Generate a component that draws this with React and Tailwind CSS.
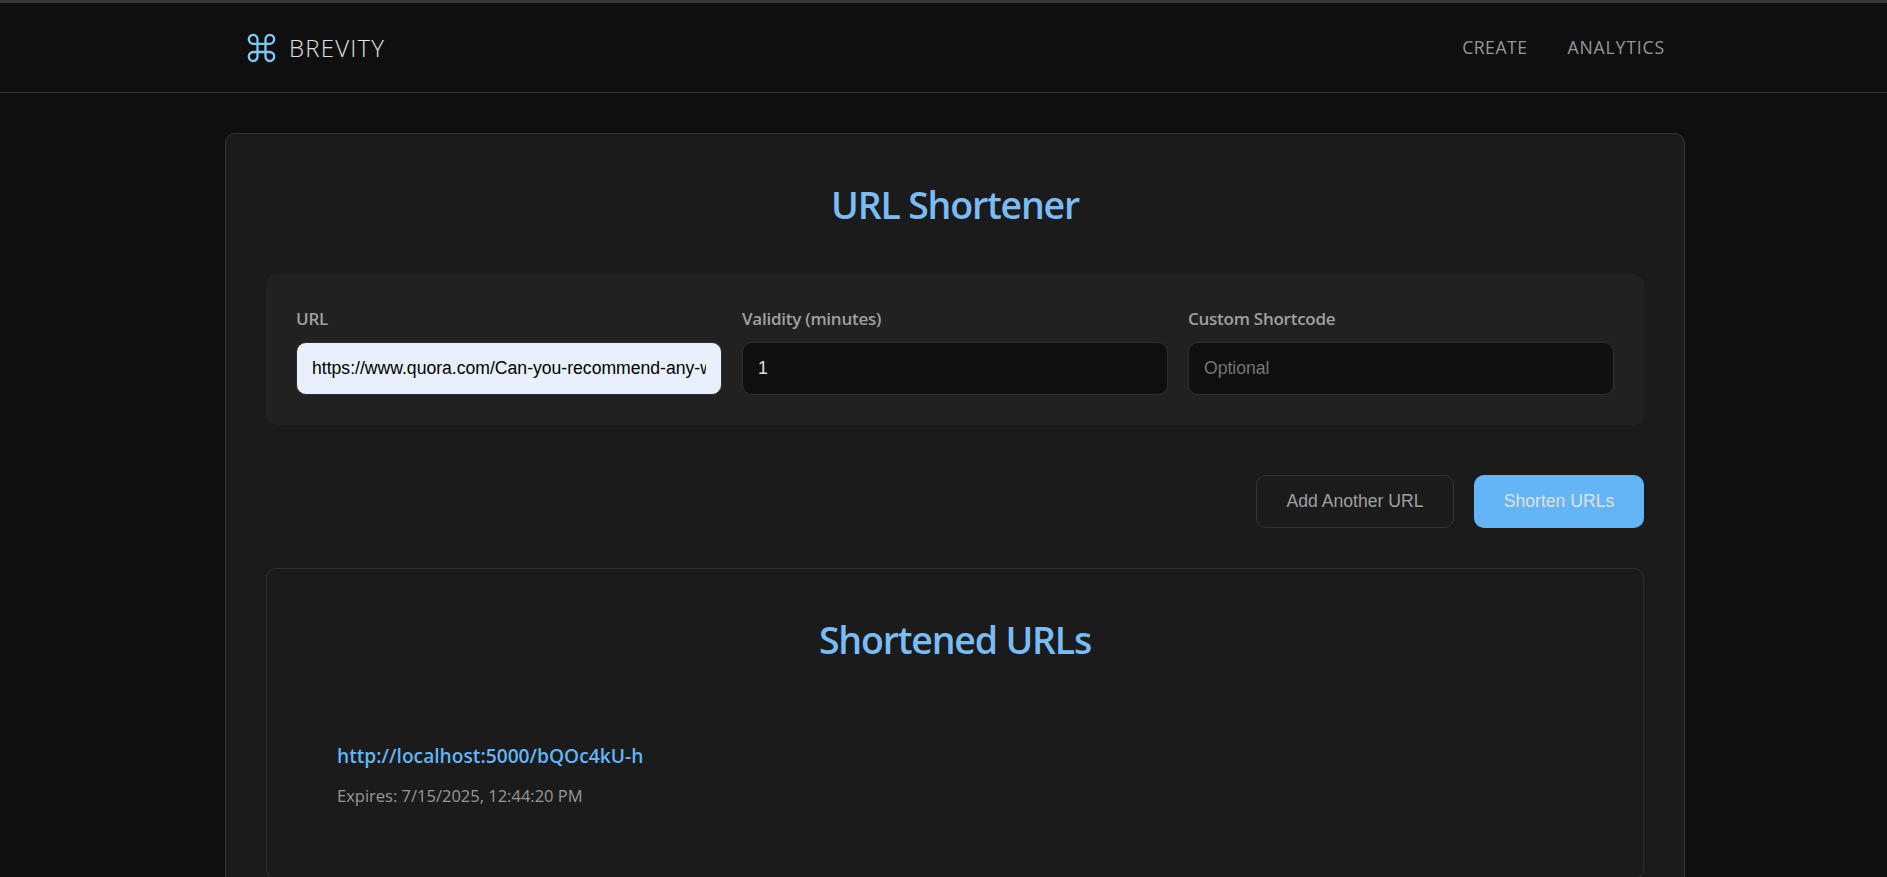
function CommandMark() {
  return (
    <svg width="31" height="31" viewBox="0 0 31 31" fill="none" stroke="#7cc9f7" strokeWidth="2.3" className="shrink-0">
      <path d="M11.500 20V7.400a4.350 4.500 0 1 0-4.350 4.400H23.850a4.350 4.500 0 1 0-4.350-4.400V24.400a4.350 4.500 0 1 0 4.350-4.400H7.150a4.350 4.500 0 1 0 4.350 4.400Z" />
    </svg>
  );
}

function Field({ label, children }) {
  return (
    <label className="flex flex-1 min-w-0 flex-col">
      <span className="mb-2.5 h-[26px] text-[17px] leading-[26px] font-semibold tracking-[-0.25px] text-[#a0a0a0]">{label}</span>
      {children}
    </label>
  );
}

const inputBase =
  "h-[53px] w-full rounded-[10px] border border-[#2f2f2f] px-[15px] font-['Liberation_Sans',Arial,sans-serif] text-[17.600px] outline-none";

export default function App() {
  return (
    <div className="h-[877px] overflow-hidden bg-[#0f0f0f] font-['Open_Sans','Noto_Sans',sans-serif] text-[#e0e0e0]">
      <div className="h-[3px] bg-[#37373c]" />
      <header className="flex h-[90px] items-center justify-between border-b border-[#333] pr-[222px] pl-[246px]">
        <div className="flex items-center gap-3">
          <CommandMark />
          <span className="text-[24px] leading-8 font-light tracking-[1.2px]">BREVITY</span>
        </div>
        <nav className="flex gap-10 text-[17.600px] text-[#989898]">
          <a className="tracking-[0.5px]">CREATE</a>
          <a className="tracking-[0.85px]">ANALYTICS</a>
        </nav>
      </header>
      <main className="ml-[225px] mt-10 h-[800px] w-[1460px] rounded-[10px] border border-[#333] bg-[#1b1b1b] px-10">
        <h1 className="mt-[45px] h-[52px] text-center text-[37.500px] leading-[52px] font-semibold tracking-[-1.200px] text-[#7abcf5]">URL Shortener</h1>
        <section className="mt-[43px] flex h-[151px] gap-5 rounded-[10px] bg-[#212121] px-[30px] pt-8">
          <Field label="URL">
            <input
              className={inputBase + " bg-[#e8f0fe] text-black"}
              defaultValue="https://www.quora.com/Can-you-recommend-any-websites"
            />
          </Field>
          <Field label="Validity (minutes)">
            <input className={inputBase + " bg-[#0f0f0f] text-[#e0e0e0]"} defaultValue="1" />
          </Field>
          <Field label="Custom Shortcode">
            <input className={inputBase + " bg-[#0f0f0f] placeholder:text-[#757575]"} placeholder="Optional" />
          </Field>
        </section>
        <div className="mt-[50px] flex h-[53px] justify-end gap-5 font-['Liberation_Sans',Arial,sans-serif] text-[17.600px]">
          <button className="w-[198px] rounded-[10px] border border-[#333] text-[#a0a0a0]">Add Another URL</button>
          <button className="w-[170px] rounded-[10px] bg-[#64b5f6] text-[#e0e0e0]">Shorten URLs</button>
        </div>
        <section className="mt-10 h-[311px] rounded-[10px] border border-[#2f2f2f] px-[70px]">
          <h2 className="mt-[45px] h-[52px] text-center text-[37.500px] leading-[52px] font-semibold tracking-[-1.200px] text-[#7abcf5]">Shortened URLs</h2>
          <a className="mt-[74px] block h-[32px] text-[19.200px] leading-[32px] font-semibold text-[#64b5f6]">http://localhost:5000/bQOc4kU-h</a>
          <p className="mt-[10px] text-[16.500px] leading-[28px] text-[#989898]">Expires: 7/15/2025, 12:44:20 PM</p>
        </section>
      </main>
    </div>
  );
}
